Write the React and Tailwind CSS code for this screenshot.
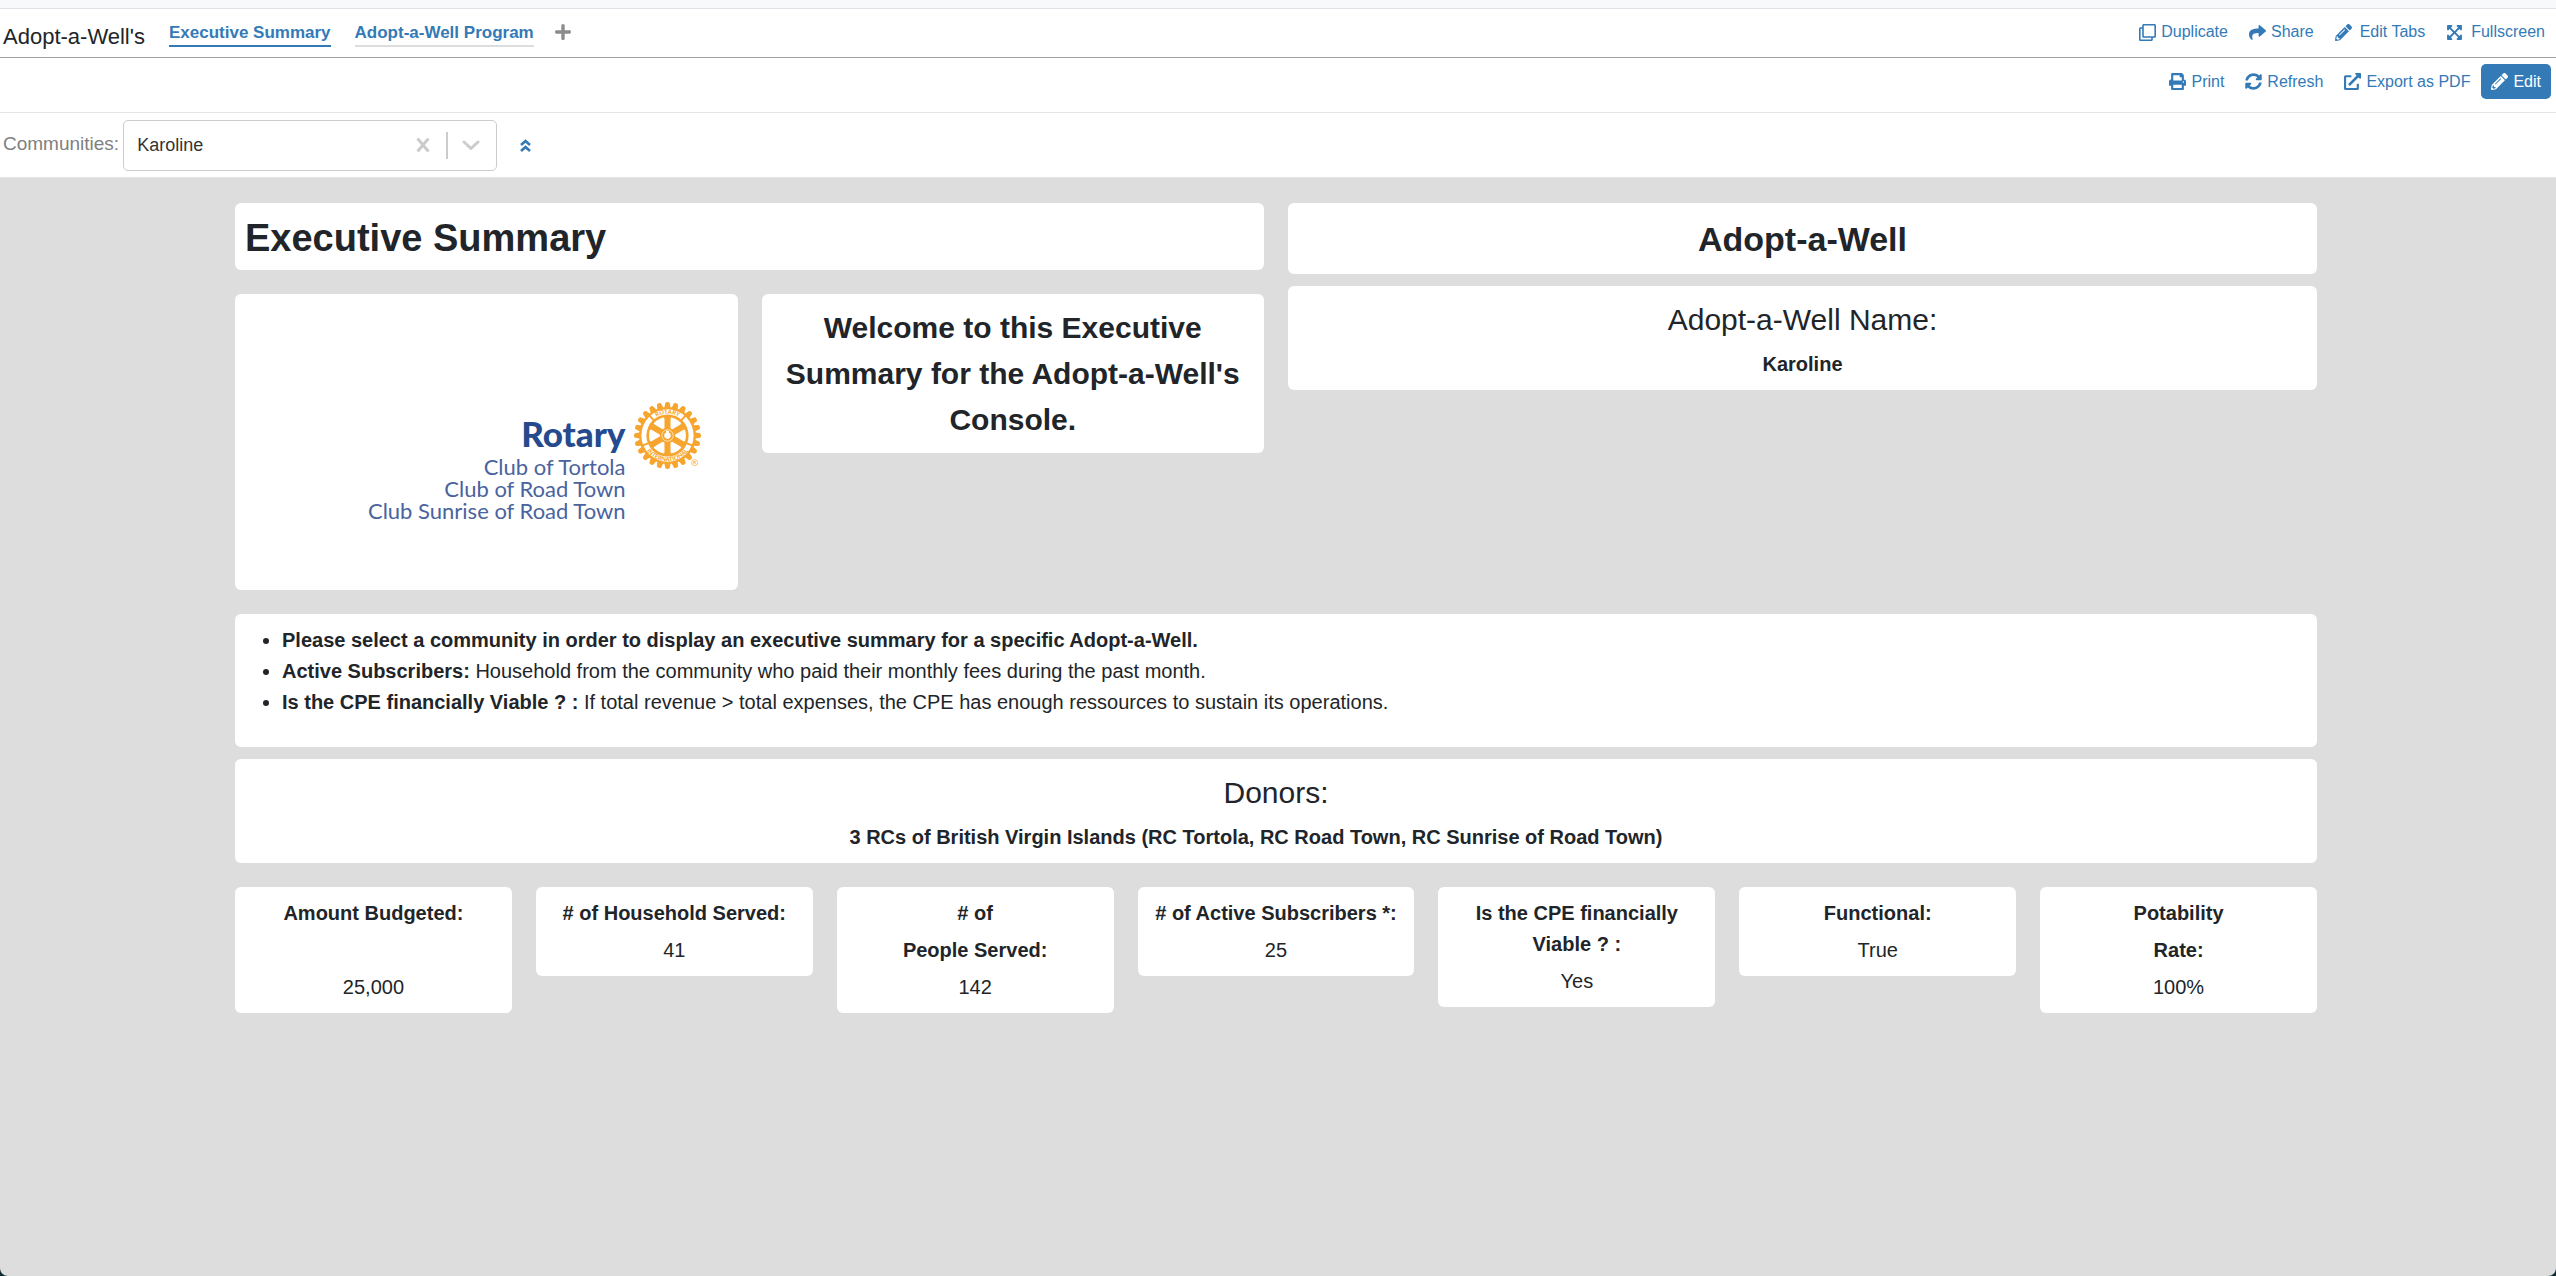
import {
  FaRegClone,
  FaShare,
  FaPencilAlt,
  FaExpandArrowsAlt,
  FaPrint,
  FaSyncAlt,
  FaExternalLinkAlt,
  FaPlus,
} from "react-icons/fa";

const TABS = [
  { label: "Executive Summary", active: true },
  { label: "Adopt-a-Well Program", active: false },
];

const STATS = [
  { title: ["Amount Budgeted:", "\u00a0"], value: "25,000" },
  { title: ["# of Household Served:"], value: "41" },
  { title: ["# of", "People Served:"], value: "142" },
  { title: ["# of Active Subscribers *:"], value: "25" },
  { title: ["Is the CPE financially Viable ? :"], value: "Yes" },
  { title: ["Functional:"], value: "True" },
  { title: ["Potability", "Rate:"], value: "100%" },
];

function Card({ className = "", children }) {
  return <section className={"rounded-md bg-white " + className}>{children}</section>;
}

function Action({ icon: Icon, label, gap = "gap-[5px]" }) {
  return (
    <button type="button" className={"flex items-center text-base text-[#337ab7] " + gap}>
      <Icon className="size-[17px]" />
      {label}
    </button>
  );
}

const TEETH = Array.from({ length: 24 }, (_, i) => i * 15);
const SPOKES = [0, 60, 120, 180, 240, 300];
const DIVIDERS = [-42, 42, 112, -112];

function RotaryWheel() {
  return (
    <svg viewBox="-100 -100 200 200" className="size-[67px]" role="img" aria-label="Rotary International wheel">
      <g fill="#f7a52d">
        {TEETH.map((a) => (
          <path key={a} d="M-10 -80 L-6.500 -97 Q-5 -100 0 -100 Q5 -100 6.500 -97 L10 -80 Z" transform={`rotate(${a})`} />
        ))}
        <circle r="85" />
      </g>
      <circle r="78" fill="#fff" />
      <circle r="63" fill="#f7a52d" />
      <circle r="55" fill="#fff" />
      <g fill="#f7a52d">
        {DIVIDERS.map((a) => (
          <rect key={a} x="-3" y="-81" width="6" height="20" transform={`rotate(${a})`} />
        ))}
        {SPOKES.map((a) => (
          <path key={a} d="M-9 -10 L-9 -50 L-13 -58 L13 -58 L9 -50 L9 -10 Z" transform={`rotate(${a})`} />
        ))}
        <circle r="23" />
      </g>
      <circle r="17" fill="none" stroke="#fff" strokeWidth="2" />
      <path d="M-4 -9 V-14 H4 V-9 A10 10 0 1 1 -4 -9 Z" fill="#fff" />
      <path id="wheel-top" d="M-65 0 A65 65 0 0 1 65 0" fill="none" />
      <path id="wheel-bottom" d="M-77 0 A77 77 0 0 0 77 0" fill="none" />
      <g fill="#f7a52d" fontFamily="Lato, sans-serif" fontWeight="900" fontSize="18" textAnchor="middle">
        <text>
          <textPath href="#wheel-top" startOffset="50%">ROTARY</textPath>
        </text>
        <text>
          <textPath href="#wheel-bottom" startOffset="50%">INTERNATIONAL</textPath>
        </text>
      </g>
      <circle cx="81" cy="81" r="9" fill="#fff" stroke="#f7a52d" strokeWidth="2" />
      <text x="81" y="86" textAnchor="middle" fontFamily="Lato, sans-serif" fontWeight="700" fontSize="13" fill="#f7a52d">
        R
      </text>
    </svg>
  );
}

function TitledValue({ title, value, valueClass = "" }) {
  return (
    <Card className="flex flex-col items-center gap-[6px] pt-[11px] pb-[10px]">
      <h3 className="text-[30px] leading-[46px]">{title}</h3>
      <p className={"font-bold " + valueClass}>{value}</p>
    </Card>
  );
}

export default function App() {
  return (
    <div className="min-h-screen bg-[#0f2b33]">
      <div className="flex min-h-screen flex-col overflow-hidden rounded-b-lg bg-[#dddddd] font-['Helvetica_Neue','Liberation_Sans',Arial,sans-serif] text-[20px] leading-[31px] text-[#212529]">
        <div className="h-[9px] border-b border-[#dee2e6] bg-[#f8f9fb]" />

        <header className="flex h-[49px] items-center justify-between border-b border-[#a0a0a0] bg-white pr-[11px] pl-[3px]">
          <div className="flex items-center">
            <h1 className="pt-2 text-[22px] leading-[30px]">Adopt-a-Well's</h1>
            <nav className="ml-6 flex items-center gap-6" aria-label="Tabs">
              {TABS.map((t) => (
                <a
                  key={t.label}
                  href="#"
                  aria-current={t.active ? "page" : undefined}
                  className={
                    "border-b-2 text-[17px] leading-[25px] font-bold text-[#337ab7] " +
                    (t.active ? "border-[#337ab7]" : "border-[#dddddd]")
                  }
                >
                  {t.label}
                </a>
              ))}
            </nav>
            <button type="button" aria-label="Add tab" className="ml-5 pb-[2px] text-[#8c8c8c]">
              <FaPlus className="size-[18px]" />
            </button>
          </div>
          <div className="flex items-center gap-[21px] pb-[2px]">
            <Action icon={FaRegClone} label="Duplicate" />
            <Action icon={FaShare} label="Share" />
            <Action icon={FaPencilAlt} label="Edit Tabs" gap="gap-2" />
            <Action icon={FaExpandArrowsAlt} label="Fullscreen" gap="gap-2" />
          </div>
        </header>

        <div className="flex h-[55px] items-center justify-end border-b border-[#e5e5e5] bg-white pr-[5px] pb-[7px]">
          <div className="mr-[11px] flex items-center gap-[21px]">
            <Action icon={FaPrint} label="Print" />
            <Action icon={FaSyncAlt} label="Refresh" />
            <Action icon={FaExternalLinkAlt} label="Export as PDF" />
          </div>
          <button
            type="button"
            className="flex h-[35px] items-center gap-[5px] rounded-[5px] bg-[#337ab7] px-[10px] text-base text-white"
          >
            <FaPencilAlt className="size-[17px]" />
            Edit
          </button>
        </div>

        <div className="flex h-[65px] items-center border-b border-[#e5e5e5] bg-white pl-[3px]">
          <label htmlFor="communities" className="pb-1 text-[19px] text-[#808080]">
            Communities:
          </label>
          <div className="ml-1 flex h-[51px] w-[374px] items-center rounded-[5px] border border-[#cccccc] bg-white">
            <select
              id="communities"
              defaultValue="Karoline"
              className="h-full flex-1 appearance-none bg-transparent pl-[13px] text-[18px] text-[#333333] outline-none"
            >
              <option>Karoline</option>
            </select>
            <button type="button" aria-label="Clear" className="text-[#cccccc]">
              <svg viewBox="0 0 14 14" className="size-[14px]" fill="none" stroke="currentColor" strokeWidth="3">
                <path d="M1.500 0.500 L12.500 13.500 M12.500 0.500 L1.500 13.500" />
              </svg>
            </button>
            <span className="mr-[14px] ml-4 h-[27px] w-[2px] bg-[#cccccc]" />
            <svg
              viewBox="0 0 18 10"
              className="mr-4 h-[10px] w-[18px] text-[#cccccc]"
              fill="none"
              stroke="currentColor"
              strokeWidth="3"
              strokeLinecap="round"
              strokeLinejoin="round"
            >
              <path d="M2 2 L9 8.500 L16 2" />
            </svg>
          </div>
          <button type="button" aria-label="Collapse filters" className="ml-[23px] text-[#337ab7]">
            <svg viewBox="0 0 11 13" className="h-[13px] w-[11px]" fill="none" stroke="currentColor" strokeWidth="2.600">
              <path d="M1 6 L5.500 2 L10 6 M1 12 L5.500 8 L10 12" />
            </svg>
          </button>
        </div>

        <main className="flex flex-col pt-[25px] pr-[239px] pl-[235px]">
          <div className="grid grid-cols-2 gap-6">
            <div className="flex flex-col gap-6">
              <Card className="px-[10px] pt-3 pb-2">
                <h2 className="text-[38px] leading-[47px] font-bold">Executive Summary</h2>
              </Card>
              <div className="grid grid-cols-2 items-start gap-6">
                <Card className="flex h-[296px] items-start justify-end gap-2 pt-[108px] pr-[37px]">
                  <div className="pt-2 text-right font-['Lato',sans-serif] text-[22px] leading-[22px] text-[#4a639e]">
                    <p className="text-[35px] leading-[46px] font-black text-[#254a8e]">Rotary</p>
                    <p>Club of Tortola</p>
                    <p>Club of Road Town</p>
                    <p>Club Sunrise of Road Town</p>
                  </div>
                  <RotaryWheel />
                </Card>
                <Card className="px-4 pt-[11px] pb-[10px] text-center">
                  <p className="text-[30px] leading-[46px] font-bold">
                    Welcome to this Executive Summary for the Adopt-a-Well's Console.
                  </p>
                </Card>
              </div>
            </div>
            <div className="flex flex-col gap-3">
              <Card className="pt-[13px] pb-[11px] text-center">
                <h2 className="text-[34px] leading-[47px] font-bold">Adopt-a-Well</h2>
              </Card>
              <TitledValue title="Adopt-a-Well Name:" value="Karoline" />
            </div>
          </div>

          <Card className="mt-6 pt-[11px] pb-[29px] pl-[47px]">
            <ul className="list-disc">
              <li>
                <strong>Please select a community in order to display an executive summary for a specific Adopt-a-Well.</strong>
              </li>
              <li>
                <strong>Active Subscribers:</strong> Household from the community who paid their monthly fees during the past
                month.
              </li>
              <li>
                <strong>Is the CPE financially Viable ? :</strong> If total revenue &gt; total expenses, the CPE has enough
                ressources to sustain its operations.
              </li>
            </ul>
          </Card>

          <div className="mt-3 flex flex-col">
            <TitledValue
              title="Donors:"
              value="3 RCs of British Virgin Islands (RC Tortola, RC Road Town, RC Sunrise of Road Town)"
              valueClass="pr-10"
            />
          </div>

          <div className="mt-6 grid grid-cols-7 items-start gap-6">
            {STATS.map((s) => (
              <Card key={s.value} className="flex flex-col gap-[6px] px-3 pt-[11px] pb-[10px] text-center">
                {s.title.map((line) => (
                  <p key={line} className="font-bold">
                    {line}
                  </p>
                ))}
                <p>{s.value}</p>
              </Card>
            ))}
          </div>
        </main>
      </div>
    </div>
  );
}
